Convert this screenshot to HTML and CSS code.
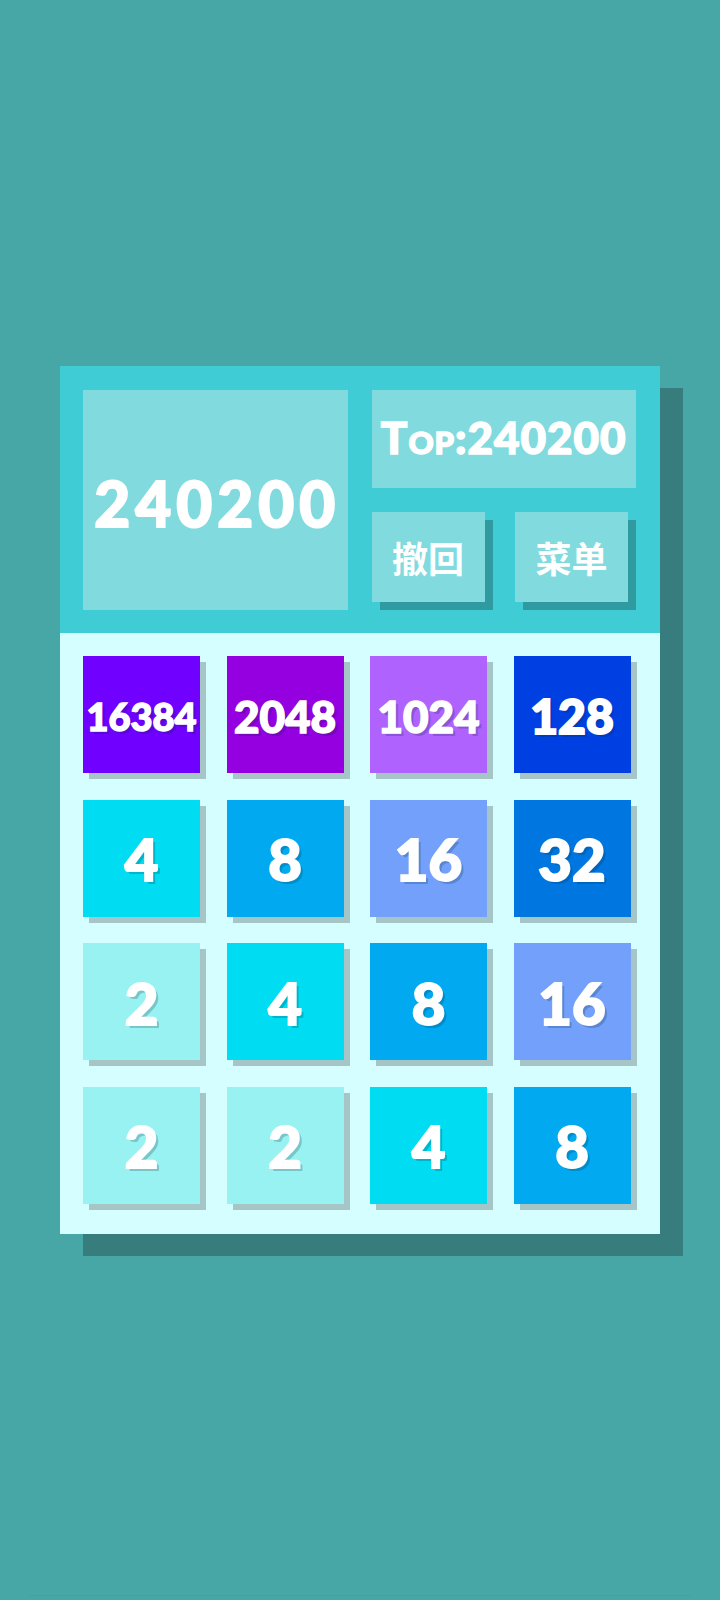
FILE: index.html
```html
<!DOCTYPE html>
<html lang="zh">
<head>
<meta charset="utf-8">
<title>2048</title>
<link rel="stylesheet" href="styles.css">
</head>
<body>
<main class="page">
  <section class="game">
    <header class="head">
      <div class="score">240200</div>
      <div class="side">
        <div class="best">Top:240200</div>
        <div class="actions">
          <button class="btn">撤回</button>
          <button class="btn">菜单</button>
        </div>
      </div>
    </header>
    <div class="board">
      <div class="tile t16384 d5">16384</div>
      <div class="tile t2048 d4">2048</div>
      <div class="tile t1024 d4">1024</div>
      <div class="tile t128 d3">128</div>
      <div class="tile t4">4</div>
      <div class="tile t8">8</div>
      <div class="tile t16">16</div>
      <div class="tile t32">32</div>
      <div class="tile t2">2</div>
      <div class="tile t4">4</div>
      <div class="tile t8">8</div>
      <div class="tile t16">16</div>
      <div class="tile t2">2</div>
      <div class="tile t2">2</div>
      <div class="tile t4">4</div>
      <div class="tile t8">8</div>
    </div>
  </section>
  <div class="foot"></div>
</main>
</body>
</html>
```
FILE: styles.css
```css
* { box-sizing: border-box; }
html, body { margin: 0; padding: 0; }
body {
  background: #47a6a6;
  width: 720px;
  height: 1600px;
  overflow: hidden;
  font-family: "Lato", "DejaVu Sans", sans-serif;
  font-weight: 900;
  color: #fff;
}
.page {
  padding-top: 366px;
  height: 1600px;
  display: flex;
  flex-direction: column;
  align-items: center;
}
.game {
  width: 600px;
  box-shadow: 23px 22px 0 #377d7d;
}
.head {
  background: #40ccd4;
  height: 267px;
  padding: 24px 24px 23px 23px;
  display: grid;
  grid-template-columns: 1fr 1fr;
  column-gap: 24px;
}
.score {
  background: #80dade;
  display: flex;
  align-items: center;
  justify-content: center;
  font-size: 62px;
  letter-spacing: 5px;
  padding-top: 6px;
  padding-left: 4px;
  -webkit-text-stroke: 2px #fff;
}
.side {
  display: flex;
  flex-direction: column;
  gap: 24px;
}
.best {
  background: #80dade;
  height: 98px;
  display: flex;
  align-items: center;
  justify-content: center;
  font-size: 44px;
  font-variant: small-caps;
  letter-spacing: 1px;
  padding-bottom: 4px;
  -webkit-text-stroke: 1.5px #fff;
}
.actions {
  display: flex;
  justify-content: space-between;
  padding-right: 8px;
}
.btn {
  width: 113px;
  height: 90px;
  border: 0;
  padding: 0;
  margin: 0;
  background: #80dade;
  box-shadow: 8px 8px 0 #2f9aa0;
  color: #fff;
  font-family: "Noto Sans CJK SC", "Noto Sans", sans-serif;
  font-weight: 700;
  font-size: 36px;
  line-height: 1;
}
.board {
  background: #d4feff;
  padding: 23px 29px 30px 23px;
  display: grid;
  grid-template-columns: repeat(4, 117px);
  grid-auto-rows: 117px;
  gap: 26.5px;
}
.tile {
  display: flex;
  align-items: center;
  justify-content: center;
  box-shadow: 6px 6px 0 #a6c5c6;
  font-size: 58px;
  line-height: 1;
  text-shadow: 3px 3px 0 rgba(0, 40, 60, 0.22);
  -webkit-text-stroke: 2px #fff;
  padding-top: 2px;
}
.tile.d3 { font-size: 48px; }
.tile.d4 { font-size: 44px; -webkit-text-stroke: 1.6px #fff; }
.tile.d5 { font-size: 38px; -webkit-text-stroke: 1.4px #fff; }
.t2 { background: #98f2f2; }
.t4 { background: #00ddf2; }
.t8 { background: #00a9f0; }
.t16 { background: #72a0fa; }
.t32 { background: #0077e0; }
.t128 { background: #0040e2; }
.t1024 { background: #b062ff; }
.t2048 { background: #9400e0; }
.t16384 { background: #7000ff; }
.foot {
  margin-top: auto;
  margin-bottom: 4px;
  width: 660px;
  height: 1px;
  background: rgba(0, 0, 0, 0.04);
}
```
